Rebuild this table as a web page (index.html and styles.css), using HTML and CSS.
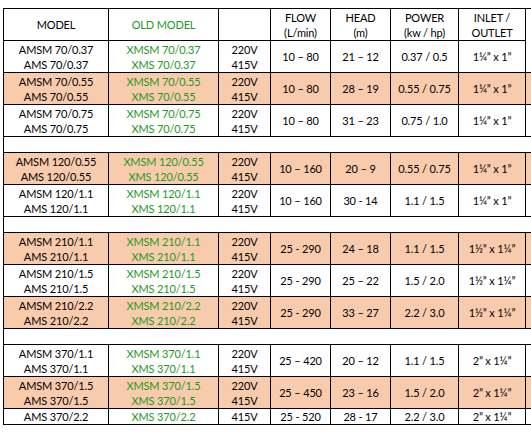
FILE: index.html
```html
<!DOCTYPE html>
<html>
<head>
<meta charset="utf-8">
<link rel="stylesheet" href="styles.css">
</head>
<body>
<div class="sheet">
<table class="spec">
  <colgroup>
    <col class="c-model"><col class="c-old"><col class="c-volt"><col class="c-flow"><col class="c-head"><col class="c-power"><col class="c-inlet"><col class="c-extra">
  </colgroup>
  <thead>
    <tr class="hdr">
      <th class="first">MODEL</th>
      <th class="green">OLD MODEL</th>
      <th></th>
      <th>FLOW<br>(L/min)</th>
      <th>HEAD<br>(m)</th>
      <th>POWER<br>(kw / hp)</th>
      <th>INLET /<br>OUTLET</th>
      <th class="extra"></th>
    </tr>
  </thead>
  <tbody>
    <tr>
      <td class="first">AMSM 70/0.37<br>AMS 70/0.37</td>
      <td class="green">XMSM 70/0.37<br>XMS 70/0.37</td>
      <td>220V<br>415V</td>
      <td>10 – 80</td><td>21 – 12</td><td>0.37 / 0.5</td><td>1¼” x 1”</td><td class="extra"></td>
    </tr>
    <tr class="peach">
      <td class="first">AMSM 70/0.55<br>AMS 70/0.55</td>
      <td class="green">XMSM 70/0.55<br>XMS 70/0.55</td>
      <td>220V<br>415V</td>
      <td>10 – 80</td><td>28 – 19</td><td>0.55 / 0.75</td><td>1¼” x 1”</td><td class="extra"></td>
    </tr>
    <tr>
      <td class="first">AMSM 70/0.75<br>AMS 70/0.75</td>
      <td class="green">XMSM 70/0.75<br>XMS 70/0.75</td>
      <td>220V<br>415V</td>
      <td>10 – 80</td><td>31 – 23</td><td>0.75 / 1.0</td><td>1¼” x 1”</td><td class="extra"></td>
    </tr>
    <tr class="gap"><td class="first" colspan="8"></td></tr>
    <tr class="peach">
      <td class="first">AMSM 120/0.55<br>AMS 120/0.55</td>
      <td class="green">XMSM 120/0.55<br>XMS 120/0.55</td>
      <td>220V<br>415V</td>
      <td>10 – 160</td><td>20 – 9</td><td>0.55 / 0.75</td><td>1¼” x 1”</td><td class="extra"></td>
    </tr>
    <tr>
      <td class="first">AMSM 120/1.1<br>AMS 120/1.1</td>
      <td class="green">XMSM 120/1.1<br>XMS 120/1.1</td>
      <td>220V<br>415V</td>
      <td>10 – 160</td><td>30 - 14</td><td>1.1 / 1.5</td><td>1¼” x 1”</td><td class="extra"></td>
    </tr>
    <tr class="gap"><td class="first" colspan="8"></td></tr>
    <tr class="peach">
      <td class="first">AMSM 210/1.1<br>AMS 210/1.1</td>
      <td class="green">XMSM 210/1.1<br>XMS 210/1.1</td>
      <td>220V<br>415V</td>
      <td>25 - 290</td><td>24 – 18</td><td>1.1 / 1.5</td><td>1½” x 1¼”</td><td class="extra"></td>
    </tr>
    <tr>
      <td class="first">AMSM 210/1.5<br>AMS 210/1.5</td>
      <td class="green">XMSM 210/1.5<br>XMS 210/1.5</td>
      <td>220V<br>415V</td>
      <td>25 - 290</td><td>25 – 22</td><td>1.5 / 2.0</td><td>1½” x 1¼”</td><td class="extra"></td>
    </tr>
    <tr class="peach">
      <td class="first">AMSM 210/2.2<br>AMS 210/2.2</td>
      <td class="green">XMSM 210/2.2<br>XMS 210/2.2</td>
      <td>220V<br>415V</td>
      <td>25 - 290</td><td>33 – 27</td><td>2.2 / 3.0</td><td>1½” x 1¼”</td><td class="extra"></td>
    </tr>
    <tr class="gap"><td class="first" colspan="8"></td></tr>
    <tr>
      <td class="first">AMSM 370/1.1<br>AMS 370/1.1</td>
      <td class="green">XMSM 370/1.1<br>XMS 370/1.1</td>
      <td>220V<br>415V</td>
      <td>25 – 420</td><td>20 – 12</td><td>1.1 / 1.5</td><td>2” x 1¼”</td><td class="extra"></td>
    </tr>
    <tr class="peach">
      <td class="first">AMSM 370/1.5<br>AMS 370/1.5</td>
      <td class="green">XMSM 370/1.5<br>XMS 370/1.5</td>
      <td>220V<br>415V</td>
      <td>25 – 450</td><td>23 – 16</td><td>1.5 / 2.0</td><td>2” x 1¼”</td><td class="extra"></td>
    </tr>
    <tr class="single">
      <td class="first">AMS 370/2.2</td>
      <td class="green">XMS 370/2.2</td>
      <td>415V</td>
      <td>25 - 520</td><td>28 - 17</td><td>2.2 / 3.0</td><td>2” x 1¼”</td><td class="extra"></td>
    </tr>
  </tbody>
</table>
</div>
</body>
</html>
```

FILE: styles.css
```css
html, body {
  margin: 0;
  padding: 0;
  background: #ffffff;
}
.sheet {
  padding: 8px 0 0 3px;
  font-family: Lato, "Open Sans", sans-serif;
  font-size: 11px;
  letter-spacing: -0.15px;
  color: #000;
}
.spec {
  border-collapse: separate;
  border-spacing: 0;
  table-layout: fixed;
  width: 528px;
  border: 0;
}
.c-model { width: 106px; }
.c-old { width: 110px; }
.c-volt { width: 52px; }
.c-flow { width: 60px; }
.c-head { width: 60px; }
.c-power { width: 68px; }
.c-inlet { width: 67px; }
.c-extra { width: 5px; }
.spec th, .spec td {
  border: 0;
  border-right: 1px solid #000;
  border-bottom: 1px solid #000;
  padding: 0;
  text-align: center;
  vertical-align: middle;
  line-height: 15px;
  font-weight: normal;
  white-space: nowrap;
  box-sizing: border-box;
}
.spec th { border-top: 1px solid #000; }
.spec .first { border-left: 1px solid #000; }
.spec tr { height: 32px; }
.spec tr.hdr { height: 33px; }
.spec tr.gap { height: 16px; }
.spec tr.single { height: 16px; }
.spec tr.gap td { border-right: none; }
.spec tr.hdr th.extra { border-bottom: none; border-right: none; }
.spec td.extra { border-right: none; }
.peach td { background: #f8cbad; }
.green { color: #1e9a1e; }
```
